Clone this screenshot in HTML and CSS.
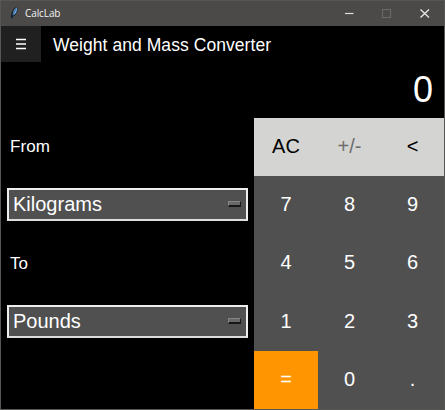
FILE: index.html
```html
<!DOCTYPE html>
<html lang="en">
<head>
<meta charset="utf-8">
<title>CalcLab</title>
<link rel="stylesheet" href="styles.css">
</head>
<body>
<div class="window">
  <header class="titlebar">
    <svg class="feather" width="10" height="14" viewBox="0 0 10 14"><path d="M1.200 12.800C.6 8.500 2 2.500 7 .8 8.500 2.500 7.500 8 3.200 10.800Z" fill="#15202c"/><path d="M2.800 9.500C2.600 6 4.100 2.700 6.900 1.300 7.800 4 6.200 8 2.800 9.500Z" fill="#6ba6e2"/><path d="M1.700 13C2.500 9 4 5.500 6.300 2.800" fill="none" stroke="#1b3048" stroke-width=".5"/></svg>
    <span class="app-name">CalcLab</span>
    <svg class="controls" width="90" height="12" viewBox="0 0 90 12"><path d="M1 6.500h8.500" stroke="#dededc" stroke-width="1.200"/><rect x="38.500" y="2.500" width="8" height="8" fill="none" stroke="#6b6b69"/><path d="M76.500 2.500l8.500 8M85 2.500l-8.500 8" stroke="#e8e8e6" stroke-width="1.300"/></svg>
  </header>
  <div class="toolbar">
    <button class="menu" aria-label="Menu"><svg width="10" height="12" viewBox="0 0 10 12"><path d="M0 1.500h10M0 6h10M0 10.500h10" stroke="#fff" stroke-width="1.500"/></svg></button>
    <h1>Weight and Mass Converter</h1>
  </div>
  <output class="display">0</output>
  <main class="content">
    <section class="units">
      <div class="label">From</div>
      <div class="field"><button class="select">Kilograms<i class="indicator"></i></button></div>
      <div class="label">To</div>
      <div class="field"><button class="select">Pounds<i class="indicator"></i></button></div>
    </section>
    <section class="keypad">
      <button class="light">AC</button><button class="light disabled">+/-</button><button class="light">&lt;</button>
      <button>7</button><button>8</button><button>9</button>
      <button>4</button><button>5</button><button>6</button>
      <button>1</button><button>2</button><button>3</button>
      <button class="equals">=</button><button>0</button><button>.</button>
    </section>
  </main>
</div>
</body>
</html>
```
FILE: styles.css
```css
* { box-sizing: border-box; }
body { margin: 0; background: #000; }
button { margin: 0; padding: 0; border: 0; font: inherit; color: inherit; background: none; }
.window {
  width: 445px; height: 410px;
  display: flex; flex-direction: column;
  border: 1px solid #565654;
  background: #000; color: #fff;
  font-family: "Liberation Sans", Arial, sans-serif;
}
.titlebar {
  height: 25px; flex: none;
  display: flex; align-items: center;
  padding: 0 10px 1px 9px;
  background: #4b4a48;
}
.app-name { margin-left: 5px; font: 10px "Open Sans", sans-serif; letter-spacing: -0.1px; color: #f2f2f2; }
.controls { margin-left: auto; }
.toolbar { height: 36px; flex: none; display: flex; }
.menu { width: 40px; padding-bottom: 1px; display: flex; align-items: center; justify-content: center; background: #202020; }
h1 { margin: 0 0 0 12px; font-size: 17.5px; line-height: 38px; font-weight: 400; letter-spacing: 0.06px; }
.display { height: 56px; flex: none; padding-right: 11px; font-size: 36px; line-height: 56px; text-align: right; }
.content { flex: 1; display: grid; grid-template-columns: 253px 190px; }
.units { display: grid; grid-template-rows: 58px 58px 59px 58px; padding-left: 6px; }
.label { padding-left: 3px; font-size: 17px; line-height: 58px; letter-spacing: 0.1px; }
.label + .field + .label { line-height: 59px; }
.field { display: flex; align-items: flex-start; padding-top: 12px; }
.select {
  width: 241px; height: 33px;
  display: flex; align-items: center; justify-content: space-between;
  padding: 0 5px 1px 4px;
  border: 2px solid #eee; border-bottom-color: #ddd;
  background: #505050;
  font-size: 20px;
}
.indicator { width: 13px; height: 6px; border: 1px solid #858585; border-right-color: #171717; border-bottom: 2px solid #171717; background: #686868; }
.keypad { display: grid; grid-template-columns: 64px 63px 63px; grid-template-rows: 58px 58px 59px 58px 58px; background: #505050; font-size: 20px; }
.keypad button { padding-bottom: 2px; }
.light { background: #d4d4d2; color: #000; }
.disabled { color: #6d6d6d; }
.equals { background: #ff9500; }
```
